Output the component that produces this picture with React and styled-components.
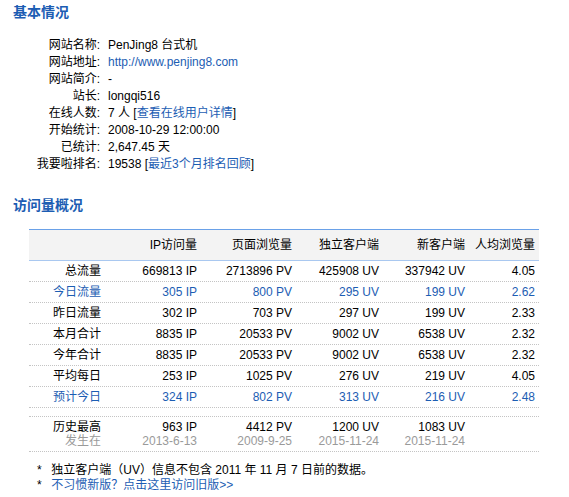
import React from "react";
import styled, { createGlobalStyle } from "styled-components";

const GlobalStyle = createGlobalStyle`
  body {
    margin: 0;
    background: #fff;
    font-family: "Liberation Sans", "Noto Sans CJK SC", sans-serif;
    font-size: 12px;
    color: #000;
  }
`;

const BLUE = "#1c5db3";

const Page = styled.div`
  width: 569px;
  padding: 3px 0 0 13px;
  box-sizing: border-box;
`;

const Title = styled.h2`
  margin: 0;
  height: 18px;
  line-height: 18px;
  font-size: 14px;
  font-weight: bold;
  color: ${BLUE};
`;

const InfoList = styled.div`
  display: grid;
  grid-template-columns: 87px 1fr;
  column-gap: 8px;
  margin: 16px 0 0 0;
  line-height: 17px;
`;

const InfoLabel = styled.div`
  text-align: right;
  white-space: nowrap;
`;

const InfoValue = styled.div`
  white-space: nowrap;
`;

const Link = styled.a`
  color: ${BLUE};
  text-decoration: none;
`;

const SecondTitle = styled(Title)`
  margin-top: 23px;
`;

const Table = styled.div`
  margin: 15px 0 0 16px;
  width: 510px;
`;

const Row = styled.div`
  display: grid;
  grid-template-columns: 76px 96px 95px 87px 86px 70px;
  height: ${(p) => p.$h || 20}px;
  line-height: ${(p) => (p.$h || 20) + 1}px;
  border-bottom: 1px dotted #c4c4c4;
  color: ${(p) => (p.$blue ? BLUE : "#000")};
`;

const HeadRow = styled(Row)`
  height: 30px;
  line-height: 30px;
  background: #f3f3f3;
  border-top: 1px solid #6aa1e8;
  border-bottom: 1px solid #a9c8f0;
`;

const Cell = styled.div`
  text-align: right;
  padding-right: 4px;
  white-space: nowrap;
`;

const StackCell = styled(Cell)`
  display: flex;
  flex-direction: column;
  align-items: flex-end;
  line-height: 14px;
  padding-top: 3px;
`;

const Sub = styled.span`
  color: #9a9a9a;
`;

const Notes = styled.div`
  margin: 11px 0 0 24px;
  line-height: 15px;
`;

const Note = styled.div`
  white-space: nowrap;
  & > b {
    font-weight: normal;
    display: inline-block;
    width: 11px;
  }
`;

const heads = ["", "IP访问量", "页面浏览量", "独立客户端", "新客户端", "人均浏览量"];

const rows = [
  ["总流量", "669813", "2713896", "425908", "337942", "4.05"],
  ["今日流量", "305", "800", "295", "199", "2.62", true],
  ["昨日流量", "302", "703", "297", "199", "2.33"],
  ["本月合计", "8835", "20533", "9002", "6538", "2.32"],
  ["今年合计", "8835", "20533", "9002", "6538", "2.32"],
  ["平均每日", "253", "1025", "276", "219", "4.05"],
  ["预计今日", "324", "802", "313", "216", "2.48", true],
];

const history = [
  ["历史最高", "发生在"],
  ["963 IP", "2013-6-13"],
  ["4412 PV", "2009-9-25"],
  ["1200 UV", "2015-11-24"],
  ["1083 UV", "2015-11-24"],
];

const info = [
  ["网站名称:", "PenJing8 台式机"],
  ["网站地址:", <Link href="#">http://www.penjing8.com</Link>],
  ["网站简介:", "-"],
  ["站长:", "longqi516"],
  ["在线人数:", <>7 人 [<Link href="#">查看在线用户详情</Link>]</>],
  ["开始统计:", "2008-10-29 12:00:00"],
  ["已统计:", "2,647.45 天"],
  ["我要啦排名:", <>19538 [<Link href="#">最近3个月排名回顾</Link>]</>],
];

const App = () => {
  return (
    <Page>
      <GlobalStyle />
      <Title>基本情况</Title>
      <InfoList>
        {info.map(([label, value]) => (
          <React.Fragment key={label}>
            <InfoLabel>{label}</InfoLabel>
            <InfoValue>{value}</InfoValue>
          </React.Fragment>
        ))}
      </InfoList>

      <SecondTitle>访问量概况</SecondTitle>
      <Table>
        <HeadRow>
          {heads.map((h, i) => (
            <Cell key={i}>{h}</Cell>
          ))}
        </HeadRow>
        {rows.map((r) => (
          <Row key={r[0]} $blue={r[6]}>
            <Cell>{r[0]}</Cell>
            <Cell>{r[1]} IP</Cell>
            <Cell>{r[2]} PV</Cell>
            <Cell>{r[3]} UV</Cell>
            <Cell>{r[4]} UV</Cell>
            <Cell>{r[5]}</Cell>
          </Row>
        ))}
        <Row $h={8} />
        <Row $h={34}>
          {history.map(([top, sub]) => (
            <StackCell key={top}>
              <span>{top}</span>
              <Sub>{sub}</Sub>
            </StackCell>
          ))}
          <Cell />
        </Row>
      </Table>
      <Notes>
        <Note>
          <b>*</b> 独立客户端（UV）信息不包含 2011 年 11 月 7 日前的数据。
        </Note>
        <Note>
          <b>*</b> <Link href="#">不习惯新版？点击这里访问旧版&gt;&gt;</Link>
        </Note>
      </Notes>
    </Page>
  );
};

export default App;
